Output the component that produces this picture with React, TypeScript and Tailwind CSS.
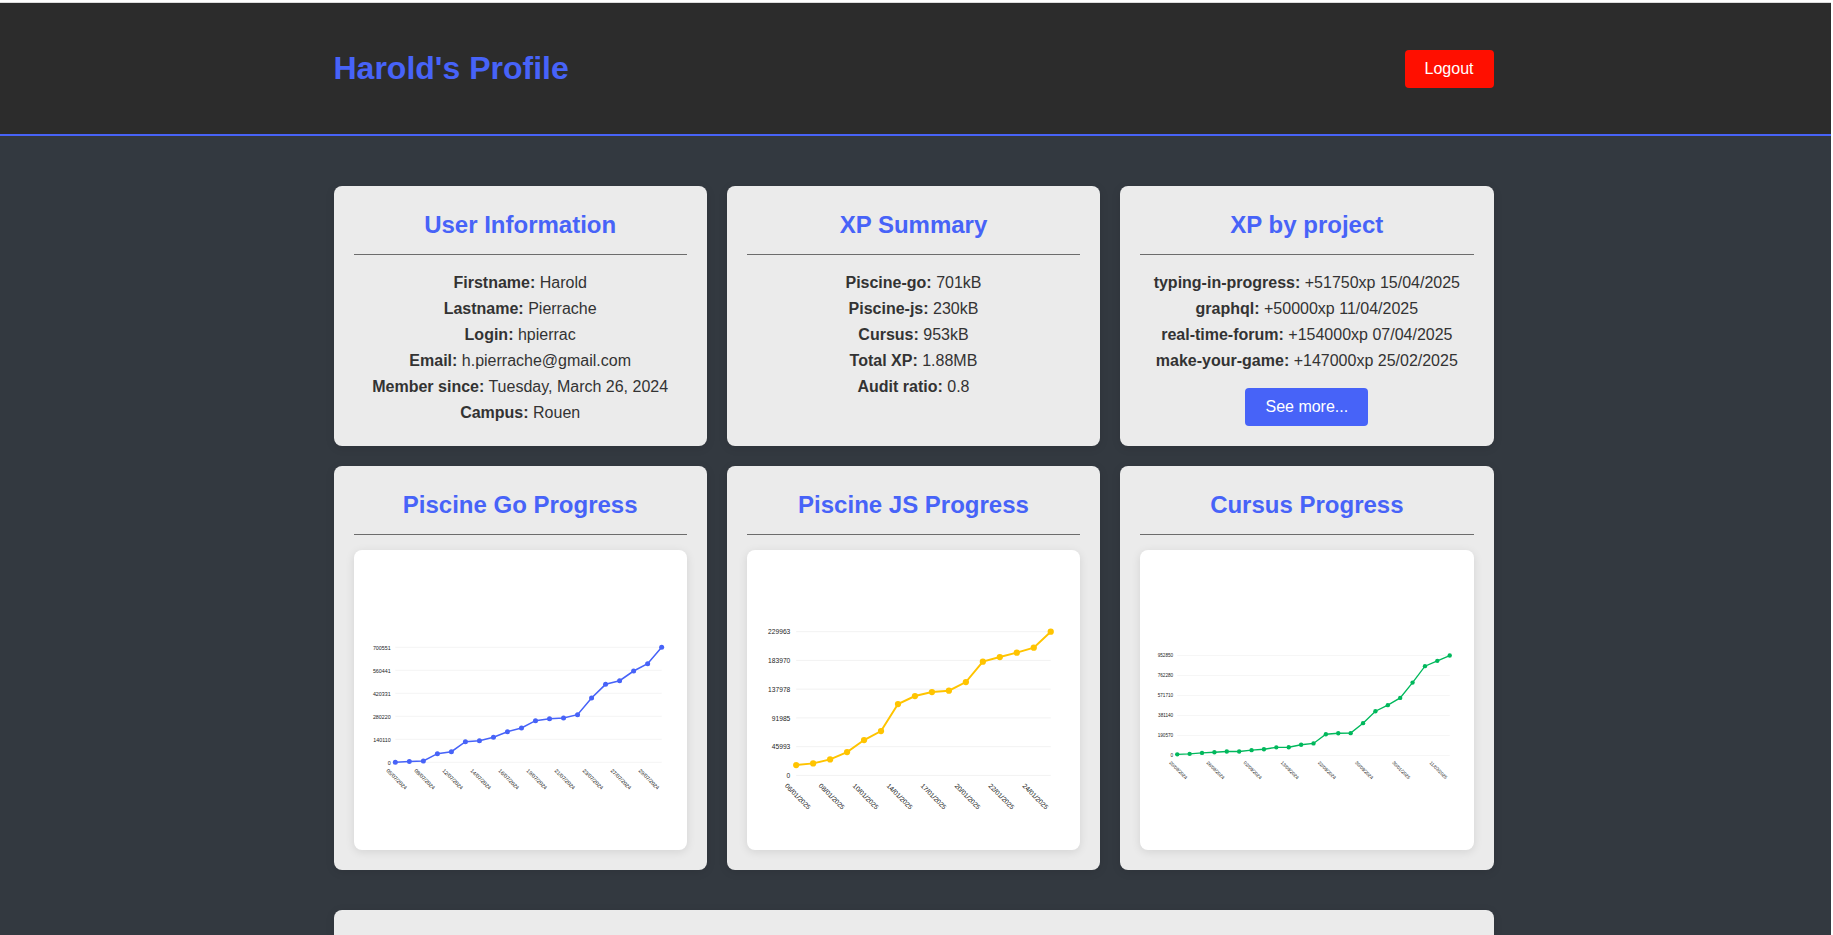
import type { ReactNode } from "react";

type Series = {
  name: string;
  color: string;
  values: number[];
  ticks: string[];
  dates: string[];
  step: number;
};

const charts: Series[] = [
  {
    name: "Piscine Go Progress",
    color: "#4763f8",
    values: [
      1000, 5000, 8000, 52800, 65000, 125900, 132000, 152300, 186800, 209200, 253800, 266000, 270000,
      290400, 391900, 475200, 497500, 556400, 601000, 700551,
    ],
    ticks: ["0", "140110", "280220", "420331", "560441", "700551"],
    dates: [
      "05/07/2024", "08/07/2024", "12/07/2024", "14/07/2024", "16/07/2024", "19/07/2024", "21/07/2024",
      "23/07/2024", "27/07/2024", "29/07/2024",
    ],
    step: 2,
  },
  {
    name: "Piscine JS Progress",
    color: "#ffc400",
    values: [
      16500, 19200, 25600, 37400, 56600, 71000, 114200, 127000, 133400, 135500, 149400, 182000, 189400,
      196400, 204400, 229963,
    ],
    ticks: ["0", "45993", "91985", "137978", "183970", "229963"],
    dates: [
      "06/01/2025", "08/01/2025", "10/01/2025", "14/01/2025", "17/01/2025", "20/01/2025", "22/01/2025",
      "24/01/2025",
    ],
    step: 2,
  },
  {
    name: "Cursus Progress",
    color: "#00b85c",
    values: [
      11000, 16000, 25000, 31500, 38000, 38500, 51000, 60000, 78000, 79000, 102000, 115000, 203000,
      212000, 213000, 308000, 422000, 480000, 549000, 695000, 851000, 902000, 952850,
    ],
    ticks: ["0", "190570", "381140", "571710", "762280", "952850"],
    dates: [
      "20/08/2024", "26/08/2024", "02/09/2024", "13/09/2024", "22/09/2024", "30/09/2024", "30/01/2025",
      "11/03/2025",
    ],
    step: 3,
  },
];

const userInfo: [string, string][] = [
  ["Firstname:", "Harold"],
  ["Lastname:", "Pierrache"],
  ["Login:", "hpierrac"],
  ["Email:", "h.pierrache@gmail.com"],
  ["Member since:", "Tuesday, March 26, 2024"],
  ["Campus:", "Rouen"],
];

const xpSummary: [string, string][] = [
  ["Piscine-go:", "701kB"],
  ["Piscine-js:", "230kB"],
  ["Cursus:", "953kB"],
  ["Total XP:", "1.88MB"],
  ["Audit ratio:", "0.8"],
];

const xpByProject: [string, string][] = [
  ["typing-in-progress:", "+51750xp 15/04/2025"],
  ["graphql:", "+50000xp 11/04/2025"],
  ["real-time-forum:", "+154000xp 07/04/2025"],
  ["make-your-game:", "+147000xp 25/02/2025"],
];

function Card({ title, children }: { title: string; children: ReactNode }) {
  return (
    <section className="rounded-lg bg-[#ebebeb] p-5 text-center shadow-[0_2px_10px_rgba(0,0,0,0.1)]">
      <h2 className="mb-[15px] border-b border-[#6c6c6c] pb-[10px] text-2xl leading-[38px] font-bold text-[#4763f8]">
        {title}
      </h2>
      {children}
    </section>
  );
}

function Rows({ rows }: { rows: [string, string][] }) {
  return (
    <>
      {rows.map(([label, value]) => (
        <p key={label} className="leading-[26px]">
          <strong className="font-bold">{label}</strong> {value}
        </p>
      ))}
    </>
  );
}

const TOP = 50;
const BOTTOM = 417;
const LEFT = 100;

function LineChart({ series }: { series: Series }) {
  const { values, ticks, dates, step, color, name } = series;
  const width = values.length * 50;
  const right = width - 50;
  const max = values[values.length - 1];
  const px = (i: number) => LEFT + (i * (right - LEFT)) / (values.length - 1);
  const py = (v: number) => BOTTOM - (v / max) * (BOTTOM - TOP);
  return (
    <div className="h-[300px] overflow-hidden rounded-lg bg-white p-[10px] shadow-[0_2px_10px_rgba(0,0,0,0.1)]">
      <svg
        role="img"
        aria-label={name}
        viewBox={`0 0 ${width} 500`}
        className="block h-[300px] w-full font-['Liberation_Sans',Arial,sans-serif]"
      >
        {ticks.map((t, i) => {
          const y = BOTTOM - (i * (BOTTOM - TOP)) / (ticks.length - 1);
          return (
            <g key={t}>
              <line x1={LEFT} x2={right} y1={y} y2={y} stroke="#eeeeee" strokeWidth="2" />
              <text x={LEFT - 15} y={y + 7} textAnchor="end" fontSize="17" fill="#1c1c1c">
                {t}
              </text>
            </g>
          );
        })}
        <polyline
          points={values.map((v, i) => `${px(i)},${py(v)}`).join(" ")}
          fill="none"
          stroke={color}
          strokeWidth="5"
        />
        {values.map((v, i) => (
          <circle key={i} cx={px(i)} cy={py(v)} r="8" fill={color} />
        ))}
        {dates.map((d, i) => {
          const x = px(i * step);
          return (
            <text
              key={d}
              x={x}
              y="475"
              textAnchor="middle"
              fontSize="17"
              fill="#1c1c1c"
              transform={`rotate(45 ${x} 475)`}
            >
              {d}
            </text>
          );
        })}
      </svg>
    </div>
  );
}

export default function App() {
  return (
    <div className="min-h-screen border-t-2 border-r-2 border-white bg-[#333940] font-['Liberation_Sans',Arial,sans-serif] text-base text-[#333333]">
      <header className="border-t border-b-2 border-t-[#dcdcdc] border-b-[#4763f8] bg-[#2c2c2c] py-10 pr-1">
        <div className="mx-auto flex max-w-[1200px] items-center justify-between px-5">
          <h1 className="text-[32px] leading-[51px] font-bold text-[#4763f8]">Harold's Profile</h1>
          <button type="button" className="rounded bg-[#ff0f00] px-5 py-[10px] leading-[18px] text-white">
            Logout
          </button>
        </div>
      </header>
      <div className="pr-1">
        <main className="mx-auto max-w-[1200px] px-5 pt-[50px]">
          <div className="grid grid-cols-1 gap-5 md:grid-cols-3">
            <Card title="User Information">
              <Rows rows={userInfo} />
            </Card>
            <Card title="XP Summary">
              <Rows rows={xpSummary} />
            </Card>
            <Card title="XP by project">
              <Rows rows={xpByProject} />
              <button
                type="button"
                className="mx-auto mt-[14px] block rounded bg-[#4763f8] px-5 py-[10px] leading-[18px] text-white"
              >
                See more...
              </button>
            </Card>
            {charts.map((c) => (
              <Card key={c.name} title={c.name}>
                <LineChart series={c} />
              </Card>
            ))}
          </div>
          <section className="mt-10 h-[25px] rounded-t-lg bg-[#ebebeb] shadow-[0_2px_10px_rgba(0,0,0,0.1)]" />
        </main>
      </div>
    </div>
  );
}
